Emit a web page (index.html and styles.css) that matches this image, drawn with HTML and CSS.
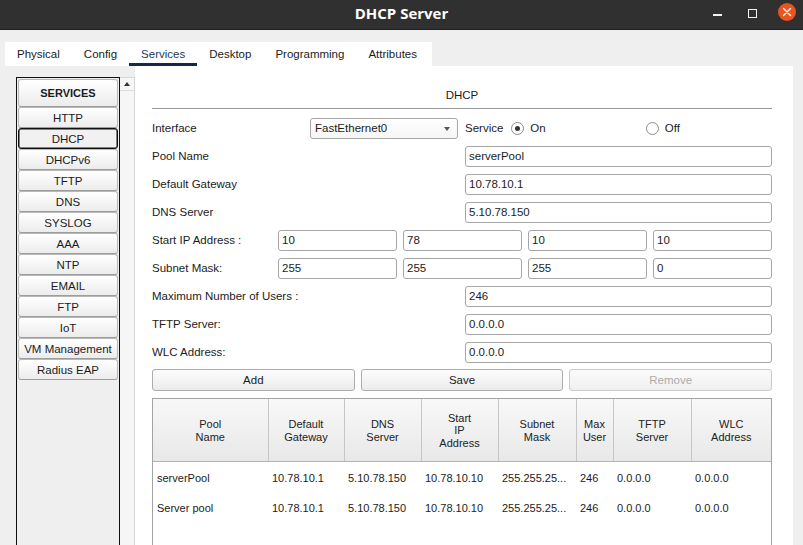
FILE: index.html
```html
<!DOCTYPE html>
<html lang="en">
<head>
<meta charset="utf-8">
<title>DHCP Server</title>
<link rel="stylesheet" href="styles.css">
</head>
<body>
<header class="titlebar">
  <div></div>
  <div class="title">DHCP Server</div>
  <div class="controls">
    <span class="ctl-min"></span>
    <span class="ctl-max"></span>
    <span class="ctl-close"><svg width="18" height="18" viewBox="0 0 18 18"><path d="M5.5 5.5 L12.5 12.5 M12.5 5.5 L5.5 12.5" stroke="#fff" stroke-width="1.4" stroke-linecap="round" fill="none"/></svg></span>
  </div>
</header>
<div class="frame">
  <nav class="tabs">
    <div class="tab">Physical</div>
    <div class="tab">Config</div>
    <div class="tab active">Services</div>
    <div class="tab">Desktop</div>
    <div class="tab">Programming</div>
    <div class="tab">Attributes</div>
  </nav>
  <div class="panel">
    <aside class="sidebar">
      <div class="listbox">
        <div class="item head">SERVICES</div>
        <div class="item">HTTP</div>
        <div class="item sel">DHCP</div>
        <div class="item">DHCPv6</div>
        <div class="item">TFTP</div>
        <div class="item">DNS</div>
        <div class="item">SYSLOG</div>
        <div class="item">AAA</div>
        <div class="item">NTP</div>
        <div class="item">EMAIL</div>
        <div class="item">FTP</div>
        <div class="item">IoT</div>
        <div class="item">VM Management</div>
        <div class="item">Radius EAP</div>
      </div>
      <div class="scroll"><div class="scroll-up"><span class="up-arrow"></span></div></div>
    </aside>
    <main class="main">
      <div class="heading">DHCP</div>
      <div class="form">
        <div class="row">
          <div class="lbl iface">Interface</div>
          <div class="select"><span>FastEthernet0</span><span class="caret"></span></div>
          <div class="service">
            <span>Service</span>
            <span class="radio on"></span>
            <span class="opt">On</span>
            <span class="radio off-radio"></span>
            <span class="opt">Off</span>
          </div>
        </div>
        <div class="row"><div class="lbl">Pool Name</div><div class="field">serverPool</div></div>
        <div class="row"><div class="lbl">Default Gateway</div><div class="field">10.78.10.1</div></div>
        <div class="row"><div class="lbl">DNS Server</div><div class="field">5.10.78.150</div></div>
        <div class="row">
          <div class="lbl short">Start IP Address :</div>
          <div class="quad"><div class="field">10</div><div class="field">78</div><div class="field">10</div><div class="field">10</div></div>
        </div>
        <div class="row">
          <div class="lbl short">Subnet Mask:</div>
          <div class="quad"><div class="field">255</div><div class="field">255</div><div class="field">255</div><div class="field">0</div></div>
        </div>
        <div class="row"><div class="lbl">Maximum Number of Users :</div><div class="field">246</div></div>
        <div class="row"><div class="lbl">TFTP Server:</div><div class="field">0.0.0.0</div></div>
        <div class="row"><div class="lbl">WLC Address:</div><div class="field">0.0.0.0</div></div>
      </div>
      <div class="buttons">
        <div class="btn">Add</div>
        <div class="btn">Save</div>
        <div class="btn disabled">Remove</div>
      </div>
      <div class="grid">
        <table class="pools">
          <colgroup>
            <col class="c1"><col class="c2"><col class="c3"><col class="c4"><col class="c5"><col class="c6"><col class="c7"><col class="c8">
          </colgroup>
          <thead>
            <tr>
              <th>Pool<br>Name</th>
              <th>Default<br>Gateway</th>
              <th>DNS<br>Server</th>
              <th>Start<br>IP<br>Address</th>
              <th>Subnet<br>Mask</th>
              <th>Max<br>User</th>
              <th>TFTP<br>Server</th>
              <th>WLC<br>Address</th>
            </tr>
          </thead>
          <tbody>
            <tr class="first">
              <td>serverPool</td><td>10.78.10.1</td><td>5.10.78.150</td><td>10.78.10.10</td><td>255.255.25...</td><td>246</td><td>0.0.0.0</td><td>0.0.0.0</td>
            </tr>
            <tr>
              <td>Server pool</td><td>10.78.10.1</td><td>5.10.78.150</td><td>10.78.10.10</td><td>255.255.25...</td><td>246</td><td>0.0.0.0</td><td>0.0.0.0</td>
            </tr>
          </tbody>
        </table>
      </div>
    </main>
  </div>
</div>
</body>
</html>
```
FILE: styles.css
```css
html, body {
  margin: 0;
  padding: 0;
}
body {
  width: 803px;
  height: 545px;
  overflow: hidden;
  background: #efefef;
  font-family: "Liberation Sans", Arial, sans-serif;
  font-size: 11.5px;
  color: #1c1c1c;
}

/* ---------- title bar ---------- */
.titlebar {
  height: 29px;
  border-bottom: 1px solid #1f1f1f;
  background: #303030;
  display: grid;
  grid-template-columns: 1fr auto 1fr;
  align-items: start;
}
.title {
  font-family: "Open Sans", "DejaVu Sans", sans-serif;
  font-weight: 700;
  font-size: 15px;
  line-height: 20px;
  color: #ffffff;
  padding-top: 3px;
}
.controls {
  justify-self: end;
  display: flex;
  align-items: flex-start;
  padding: 3px 7px 0 0;
}
.ctl-min {
  width: 9px;
  height: 2px;
  background: #f2f2f2;
  margin-top: 11px;
}
.ctl-max {
  width: 7px;
  height: 7px;
  border: 1.5px solid #f2f2f2;
  margin: 6px 0 0 26px;
}
.ctl-close {
  width: 18px;
  height: 18px;
  border-radius: 50%;
  background: #e95420;
  margin-left: 21px;
  display: flex;
}

/* ---------- tabs ---------- */
.frame {
  padding: 12px 0 0 5px;
}
.tabs {
  display: flex;
  width: max-content;
  height: 24px;
  background: #ffffff;
  padding-right: 3px;
}
.tab {
  box-sizing: border-box;
  height: 24px;
  padding: 3px 12px 0;
  border-bottom: 3px solid transparent;
  display: flex;
  align-items: center;
  color: #1c1c1c;
}
.tab.active {
  border-bottom-color: #13294b;
  color: #243b5c;
}

/* ---------- panel ---------- */
.panel {
  display: flex;
  width: 788px;
  height: 479px;
  background: #ffffff;
}
.sidebar {
  flex: none;
  width: 130px;
  box-sizing: border-box;
  background: #efefef;
  padding: 11px 0 0 11px;
  display: flex;
  align-items: flex-start;
}
.listbox {
  width: 104px;
  height: 480px;
  box-sizing: border-box;
  border: 1px solid #111111;
  border-bottom: none;
  background: #efefef;
  padding: 1px 1px 0;
}
.item {
  height: 21px;
  box-sizing: border-box;
  border: 1px solid #b8b8b8;
  border-bottom-color: #9d9d9d;
  border-radius: 3px;
  background: linear-gradient(#ffffff, #ececec);
  display: flex;
  align-items: center;
  justify-content: center;
  white-space: nowrap;
}
.item.head {
  height: 28px;
  font-weight: 700;
  font-size: 11px;
}
.item.sel {
  border: 1px solid #111111;
  box-shadow: inset 0 0 0 0.5px #111111;
  background: #f1f1f1;
}
.scroll {
  width: 15px;
  height: 480px;
  box-sizing: border-box;
  background: #f6f6f6;
  border: 1px solid #d6d6d6;
  border-left: none;
  border-bottom: none;
}
.scroll-up {
  height: 13px;
  border-bottom: 1px solid #dedede;
  display: flex;
  justify-content: center;
  padding-top: 4px;
  box-sizing: border-box;
}
.up-arrow {
  width: 0;
  height: 0;
  border-left: 3.5px solid transparent;
  border-right: 3.5px solid transparent;
  border-bottom: 4px solid #333333;
}

/* ---------- main ---------- */
.main {
  flex: 1;
  min-width: 0;
  padding: 0 21px 0 17px;
  display: flex;
  flex-direction: column;
}
.heading {
  box-sizing: border-box;
  height: 43px;
  border-bottom: 1px solid #9a9a9a;
  display: flex;
  align-items: flex-end;
  justify-content: center;
  line-height: 14px;
  padding-bottom: 6px;
}
.form {
  margin-top: 9px;
  display: flex;
  flex-direction: column;
  gap: 7px;
}
.row {
  display: flex;
  align-items: center;
  height: 21px;
}
.lbl {
  flex: none;
  width: 313px;
  white-space: nowrap;
  padding-bottom: 2px;
}
.lbl.short {
  width: 126px;
}
.lbl.iface {
  width: 158px;
}
.field {
  flex: 1;
  min-width: 0;
  height: 21px;
  box-sizing: border-box;
  border: 1px solid #a6a6a6;
  border-radius: 3px;
  background: #ffffff;
  padding: 0 3px 2px;
  display: flex;
  align-items: center;
}
.quad {
  flex: 1;
  display: grid;
  grid-template-columns: repeat(4, 1fr);
  gap: 6px;
}
.select {
  flex: none;
  width: 148px;
  height: 21px;
  box-sizing: border-box;
  border: 1px solid #a6a6a6;
  border-radius: 3px;
  background: linear-gradient(#ffffff, #f6f6f6);
  display: flex;
  align-items: center;
  justify-content: space-between;
  padding: 0 7px 2px 4px;
}
.caret {
  width: 0;
  height: 0;
  margin-top: 2px;
  border-left: 3.5px solid transparent;
  border-right: 3.5px solid transparent;
  border-top: 4px solid #555555;
}
.service {
  margin-left: 7px;
  display: flex;
  align-items: center;
}
.service > span:not(.radio) {
  padding-bottom: 2px;
}
.radio {
  width: 13px;
  height: 13px;
  box-sizing: border-box;
  border: 1px solid #8c8c8c;
  border-radius: 50%;
  background: #ffffff;
  margin-left: 8px;
  display: flex;
  align-items: center;
  justify-content: center;
}
.radio.on::after {
  content: "";
  width: 5px;
  height: 5px;
  border-radius: 50%;
  background: #333333;
}
.radio.off-radio {
  margin-left: 100px;
}
.opt {
  margin-left: 6px;
}

/* ---------- buttons ---------- */
.buttons {
  margin-top: 6px;
  display: grid;
  grid-template-columns: repeat(3, 1fr);
  gap: 6px;
}
.btn {
  height: 22px;
  box-sizing: border-box;
  border: 1px solid #acacac;
  border-radius: 3px;
  background: linear-gradient(#fdfdfd, #ebebeb);
  display: flex;
  align-items: center;
  justify-content: center;
}
.btn.disabled {
  color: #ababab;
  border-color: #cbcbcb;
  background: linear-gradient(#fbfbfb, #f0f0f0);
}

/* ---------- table ---------- */
.grid {
  margin-top: 7px;
  flex: 1;
  border: 1px solid #a3a3a3;
  border-bottom: none;
  background: #ffffff;
}
.pools {
  width: 100%;
  border-collapse: collapse;
  table-layout: fixed;
  font-size: 11px;
}
.c1 { width: 115px; }
.c2 { width: 76px; }
.c3 { width: 77px; }
.c4 { width: 77px; }
.c5 { width: 78px; }
.c6 { width: 37px; }
.c7 { width: 78px; }
.c8 { width: 80px; }
.pools th {
  height: 61px;
  padding: 1px 2px 0;
  font-weight: normal;
  line-height: 12.5px;
  text-align: center;
  vertical-align: middle;
  color: #222222;
  background: linear-gradient(#f8f8f8, #e8e8e8);
  border-right: 1px solid #c6c6c6;
  border-bottom: 1px solid #b4b4b4;
}
.pools th:last-child {
  border-right: none;
}
.pools td {
  padding: 8px 4px;
  line-height: 14px;
  white-space: nowrap;
  overflow: hidden;
}
.pools tr.first td {
  padding-top: 9px;
}
```
